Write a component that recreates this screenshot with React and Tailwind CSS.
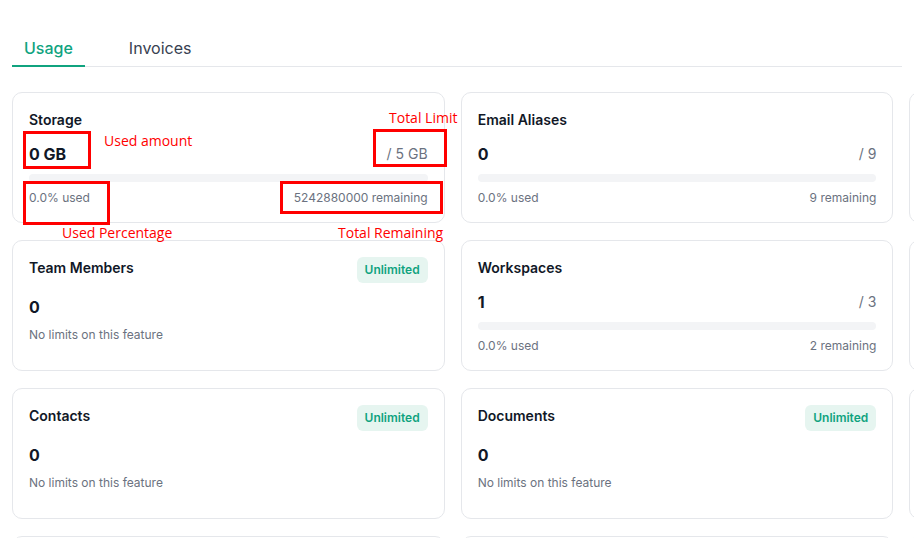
import React from "react";

const cards = [
  { type: "usage", title: "Storage", value: "0 GB", limit: "/ 5 GB", pct: "0.0% used", rem: "5242880000 remaining" },
  { type: "usage", title: "Email Aliases", value: "0", limit: "/ 9", pct: "0.0% used", rem: "9 remaining" },
  { type: "usage", title: "Domains", value: "0", limit: "/ 1", pct: "0.0% used", rem: "1 remaining" },
  { type: "unlimited", title: "Team Members", value: "0" },
  { type: "usage", title: "Workspaces", value: "1", limit: "/ 3", pct: "0.0% used", rem: "2 remaining" },
  { type: "unlimited", title: "Projects", value: "0" },
  { type: "unlimited", title: "Contacts", value: "0" },
  { type: "unlimited", title: "Documents", value: "0" },
  { type: "unlimited", title: "Forms", value: "0" },
  { type: "unlimited", title: "Tasks", value: "0" },
  { type: "unlimited", title: "Notes", value: "0" },
  { type: "unlimited", title: "Files", value: "0" },
];

function Card({ c }) {
  if (c.type === "unlimited") {
    return (
      <div className="h-[131px] rounded-[10px] border border-[#e5e7eb] bg-white px-4 pt-4">
        <div className="flex items-start justify-between">
          <div className="pt-px text-sm leading-5 font-semibold text-[#111827]">{c.title}</div>
          <div className="h-[26px] rounded-md bg-[#e6f5f0] px-2 py-[5px] text-xs leading-4 font-semibold text-[#10a37f]">
            Unlimited
          </div>
        </div>
        <div className="mt-3 text-base leading-6 font-bold text-[#111827]">{c.value}</div>
        <div className="mt-2 text-xs leading-4 text-[#6b7280]">No limits on this feature</div>
      </div>
    );
  }
  return (
    <div className="h-[131px] rounded-[10px] border border-[#e5e7eb] bg-white px-4 pt-4">
      <div className="pt-px text-sm leading-5 font-semibold text-[#111827]">{c.title}</div>
      <div className="mt-3 flex items-center justify-between">
        <span className="text-base leading-6 font-bold text-[#111827]">{c.value}</span>
        <span className="text-sm leading-6 text-[#6b7280]">{c.limit}</span>
      </div>
      <div className="mt-2 h-2 w-full rounded-full bg-[#f3f4f6]" />
      <div className="mt-2 flex items-center justify-between text-xs leading-4 text-[#6b7280]">
        <span>{c.pct}</span>
        <span>{c.rem}</span>
      </div>
    </div>
  );
}

export default function App() {
  return (
    <div
      className="relative h-[538px] w-[914px] overflow-hidden bg-white"
      style={{ fontFamily: "Inter, 'Noto Sans', sans-serif" }}
    >
      <div className="mx-3 pt-6">
        <div className="flex gap-8 border-b border-[#e5e7eb]">
          <div className="-mb-px border-b-2 border-[#10a37f] px-3 pt-3 pb-[5px] text-base leading-6 font-medium text-[#10a37f]">
            Usage
          </div>
          <div className="-mb-px border-b-2 border-transparent px-3 pt-3 pb-[5px] text-base leading-6 text-[#374151]">
            Invoices
          </div>
        </div>
        <div className="mt-[25px] grid w-[1330px] grid-cols-3 gap-x-4 gap-y-[17px]">
          {cards.map((c, i) => (
            <Card key={i} c={c} />
          ))}
        </div>
      </div>

      {/* annotations */}
      <div className="pointer-events-none absolute inset-0" style={{ fontFamily: "'Open Sans', sans-serif" }}>
        <div className="absolute left-[23px] top-[131px] h-[38px] w-[68px] border-[3px] border-[#ff0000]" />
        <div className="absolute left-[373px] top-[129px] h-[38px] w-[74px] border-[3px] border-[#ff0000]" />
        <div className="absolute left-[23px] top-[181px] h-[44px] w-[87px] border-[3px] border-[#ff0000]" />
        <div className="absolute left-[280px] top-[181px] h-[33px] w-[163px] border-[3px] border-[#ff0000]" />
        <div className="absolute left-[104px] top-[131px] text-sm leading-5 text-[#ff0000]">Used amount</div>
        <div className="absolute left-[389px] top-[108px] text-sm leading-5 text-[#ff0000]">Total Limit</div>
        <div className="absolute left-[62px] top-[223px] text-sm leading-5 text-[#ff0000]">Used Percentage</div>
        <div className="absolute left-[338px] top-[223px] text-sm leading-5 text-[#ff0000]">Total Remaining</div>
      </div>
    </div>
  );
}
